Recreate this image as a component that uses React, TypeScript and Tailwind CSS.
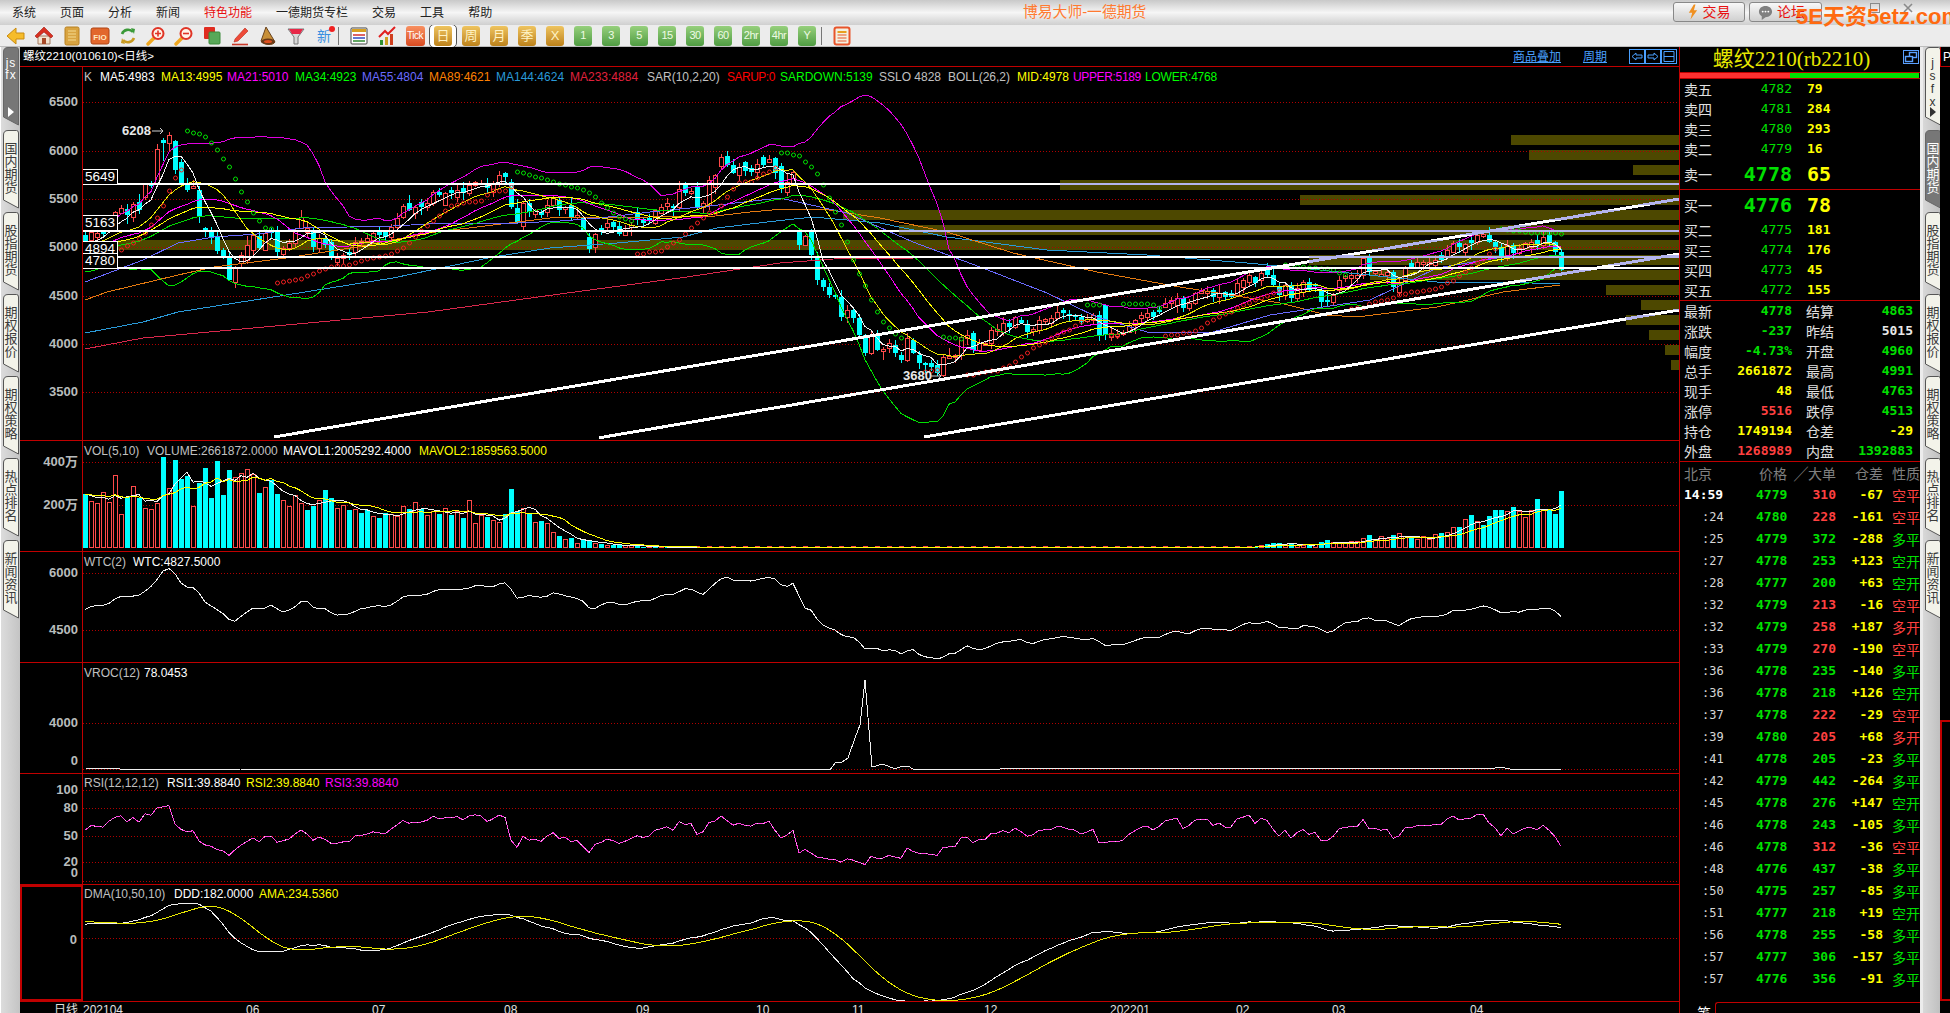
import React from "react";

const CANDLES = `c235,241 r232,240 r233,237 c230,234 r222,228 r212,222 r208,213 c209,215 r204,217 c202,210
r184,197 c184,186 r149,183 c140,143 r135,143 c141,170 c162,183 c183,190 r186,188 c190,217
c228,232 c230,237 c237,251 c250,257 c257,280 r267,282 r255,263 r245,260 r235,250 c236,248
r233,250 c231,232 c231,252 r248,254 r243,248 r230,243 r217,228 r228,232 c230,247 r238,248
c238,245 c242,258 r258,262 r255,258 c252,255 r242,252 r241,243 r238,241 r233,240 c230,235
c232,237 r227,237 r218,227 r206,217 c203,210 r207,213 c202,207 r203,207 r192,203 c192,195
r193,205 c190,193 r190,197 c188,193 r185,193 r182,185 r183,184 c183,188 r183,192 r175,183
c173,177 c182,207 c208,223 r203,226 c203,212 r210,214 c212,215 r205,212 r198,205 c200,210
r207,209 c205,217 r215,217 c218,230 c237,249 r234,247 c228,230 r223,227 c222,227 c226,234
r230,235 r225,227 c212,220 c219,223 c218,221 r210,223 r207,213 r203,206 c206,208 r189,207
c183,193 r191,193 c187,208 r203,207 r180,205 r175,187 r157,166 c156,165 c165,173 r167,175
c162,171 c168,172 r164,172 c157,165 r159,162 c158,173 c166,188 r182,192 r172,183 c232,245
r236,245 c232,255 c257,280 c280,287 c287,295 c295,297 c297,317 r310,317 c310,318 c318,335
c335,353 r335,353 c335,350 r349,351 r343,348 c345,353 c355,360 r338,360 c340,353 c355,363
c363,365 c363,367 c365,373 r357,375 r356,358 r355,357 r337,355 r335,338 c333,350 r343,350
r343,345 r330,343 r329,331 r323,332 c323,327 r317,327 c320,323 c325,332 r329,331 r320,330
r319,321 r318,323 r312,318 c310,313 c314,316 c315,317 c317,322 r319,321 r315,320 c315,335
c305,335 r333,337 r334,336 r332,334 r325,332 r320,325 r315,318 r313,317 c312,317 c310,312
r303,307 r300,303 r298,305 c298,308 r303,308 r293,303 r291,293 r291,293 c290,297 r293,297
c292,297 c293,297 r283,295 r280,287 r275,282 c277,283 r273,280 c268,275 c275,285 c287,295
r285,295 c285,298 r288,298 r282,292 c282,290 c284,286 c290,302 c300,302 r295,302 r280,290
r276,278 r275,278 r275,278 r258,275 c258,272 r271,273 r274,276 r272,275 c272,287 r283,292
r267,280 c263,267 r262,267 r262,264 r262,264 r260,265 c255,260 r250,257 r243,252 c243,247
r244,252 c240,243 r235,242 r234,236 c235,242 c242,247 c247,257 r245,257 c245,253 r248,253
r243,248 r242,247 c240,245 r237,245 c235,243 c242,252 c252,270`;

const candles = CANDLES.trim().split(/\s+/).map((s) => {
  const [t, b] = s.slice(1).split(",").map(Number);
  return { red: s[0] === "r", top: t, bot: b };
});
const N = candles.length;
const X = (i: number) => 85 + 6 * i;
const closes = candles.map((c) => (c.red ? c.top : c.bot));
const OFF = 60;
const hist = Array.from({ length: OFF }, (_, j) => {
  const k = OFF - j;
  return 236 + (k <= 26 ? k : 26 + (k - 26) * 2) + 12 * Math.sin(k * 0.9);
});
const all = [...hist, ...closes];
const ma = (n: number, i: number, src = all, off = OFF) => {
  let s = 0;
  for (let k = 0; k < n; k++) s += src[Math.max(0, off + i - k)];
  return s / n;
};
const sd = (n: number, i: number) => {
  const m = ma(n, i);
  let s = 0;
  for (let k = 0; k < n; k++) s += (all[OFF + i - k] - m) ** 2;
  return Math.sqrt(s / n);
};
const poly = (f: (i: number) => number, from = 0, to = N) => {
  const p: string[] = [];
  for (let i = from; i < to; i++) p.push(`${X(i)},${f(i).toFixed(1)}`);
  return p.join(" ");
};
const kp = (a: number[][]) => a.map((p) => p.join(",")).join(" ");

const MA55 = [[85,282],[143,260],[178,243],[214,237],[257,234],[303,228],[393,226],[446,223],[518,223],[560,221],[600,218],[650,212],[700,207],[780,198],[847,213],[913,242],[980,267],[1047,293],[1097,317],[1147,332],[1213,332],[1270,315],[1370,300],[1437,268],[1503,257],[1560,257]];
const MA89 = [[85,300],[107,292],[178,275],[214,267],[286,258],[357,247],[428,233],[550,218],[650,217],[716,216],[750,212],[783,209],[823,209],[880,218],[947,232],[1013,253],[1097,272],[1180,287],[1280,303],[1327,315],[1357,317],[1437,307],[1503,292],[1560,285]];
const MA144 = [[85,333],[143,322],[178,312],[286,295],[393,278],[493,257],[550,248],[617,243],[683,237],[717,228],[767,222],[813,217],[880,223],[947,237],[1047,250],[1147,255],[1247,263],[1300,268],[1437,282],[1503,282],[1560,284]];
const MA233 = [[85,349],[143,338],[286,325],[428,312],[560,294],[680,278],[780,263],[847,258],[913,258],[1100,257],[1560,256]];

const VOL_HEAD = [-54,46,44,55,45,72,33,-51,61,-50,39,38,44,-91,59,-88,-69,-72,41,-65,-80,-50,-87,-53,-78,70,74,78,73,-55,60,-68,-54,47,41,52,44,-38,-42,47,-58,-50,39,42,-38,38,-35,-38,31,-30,-35,33,31,41,-39,45,-39,32,36,-34,39,-33,36,-30,47,24,32,-31,27,25,-34,-59,-37,39,-34,25,-27,24,15,-12,8,-10,4,-8,-7,4,-4,2,-3,-3,2,2,-3,-1,1];
const VOL_TAIL = [-1,2,-4,-5,-5,3,-5,2,2,-3,3,-6,-8,5,5,5,6,6,9,-13,8,11,9,-13,14,11,-10,8,11,8,13,-15,15,20,-21,28,-33,26,-23,-32,-38,-38,36,-41,36,30,37,-49,38,-38,-34,-57];
const vols = [
  ...VOL_HEAD,
  ...Array.from({ length: N - VOL_HEAD.length - VOL_TAIL.length }, (_, k) => (k % 2 ? 1 : -1)),
  ...VOL_TAIL,
];
const absVols = vols.map(Math.abs);
const volMa = (n: number, i: number) => {
  let s = 0;
  for (let k = 0; k < n; k++) s += absVols[Math.max(0, i - k)];
  return s / n;
};

const rsi: number[] = [];
{
  let up = 1, tot = 2;
  all.forEach((c, j) => {
    if (j === 0) return;
    const d = all[j - 1] - c;
    up = (Math.max(d, 0) + 11 * up) / 12;
    tot = (Math.abs(d) + 11 * tot) / 12;
    if (j >= OFF) rsi.push((up / tot) * 100);
  });
}
const ddd = (i: number) => (ma(10, i) - ma(50, i)) * 0.6;
const ama = (i: number) => {
  let s = 0;
  for (let k = 0; k < 10; k++) s += ddd(i - k);
  return s / 10;
};

type Dots = [number, "g" | "r", number[]];
const SAR: Dots[] = [
  [6, "r", [250,246,243,239,233,225,218,206,191,178,170]],
  [17, "g", [131,133,134,137,143,150,159,167,179,192,202,213,221,228,229]],
  [32, "r", [283,282,281,280,279,276,274,271,269,267,266,266,265,263,261,259,258,257,256,254,251,248,243,237,231,226,221,216,211,206,205,203,202,202,201,195,191,191,191,187]],
  [72, "g", [172,173,175,177,178,180,182,184,185,187,188,190,193,197,203,208,213,217,219,221]],
  [92, "r", [254,254,252,252,251,247,243,240,234,228,223,218,213,213,206,197,189,183,182,182,178,174,172,168]],
  [116, "g", [153,153,155,156,162,167,174,185,198,212,225,242,260,274,286,300,312,322,328,334,338]],
  [140, "r", [372,371,370]],
  [143, "g", [337,338,338,339]],
  [147, "r", [375,375,373,372,371,371,368,366,362,357,353,348,345,342,338,335,332,330,326,322]],
  [167, "g", [305,305,305]],
  [171, "r", [335,336]],
  [173, "g", [304,304,304,304,304,305,308]],
  [180, "r", [336,335,335,333,333,331,328,323,320,317,314,312,308,305,303,300,298,296,293,291]],
  [200, "g", [265,266,267,267,268,268,269,269,270,273,275]],
  [211, "r", [309,308,308,304,302,301,300,298,295,294,292,292,291,290,289,287,283,281,276,272,268,263,259,254,249]],
  [236, "g", [229,230,231,231,232,233,233,233,233,233,234]],
];

const PROFILE: [number, number][] = [[135,1511],[150,1529],[165,1633],[180,1060],[195,1300],[210,843],[225,899],[240,118],[255,1309],[270,1370],[285,1606],[300,1641],[315,1626],[330,1649],[345,1665],[360,1671]];

const HLINES = [184, 230.5, 256.5, 268];
const CHANNELS = [
  [274, 437, 1679, 199],
  [599, 437.8, 1679, 254],
  [924, 437, 1679, 310],
];

const GRID = "#b00000";

function Grid({ ys }: { ys: number[] }) {
  return (
    <>
      {ys.map((y) => (
        <line key={y} x1={83} x2={1679} y1={y + 0.5} y2={y + 0.5} stroke={GRID} strokeDasharray="1 2" shapeRendering="crispEdges" />
      ))}
    </>
  );
}

function Plot({ top, h, children }: { top: number; h: number; children: React.ReactNode }) {
  return (
    <svg width={1596} height={h} viewBox={`83 ${top} 1596 ${h}`} className="block">
      {children}
    </svg>
  );
}

function Axis({ top, labels, boxed }: { top: number; labels: [string, number][]; boxed?: boolean }) {
  return (
    <div className={boxed ? "relative w-[63px] shrink-0 border-2 border-[#c00000]" : "relative w-[63px] shrink-0 border-r border-[#c00000]"}>
      {labels.map(([t, y]) => (
        <span
          key={t + y}
          className="absolute right-[4px] -translate-y-1/2 text-[13px] font-bold leading-[14px] text-[#b8bcbc]"
          style={{ top: y - top }}
        >
          {t}
        </span>
      ))}
    </div>
  );
}

function Legend({ items, top = "top-[3px]" }: { items: [string, string, number?, number?][]; top?: string }) {
  return (
    <div className={`absolute left-[1px] flex h-[14px] text-[12px] leading-[14px] ${top}`}>
      {items.map(([t, c, w, ls]) => (
        <span key={t} className="whitespace-nowrap" style={{ color: c, width: w, letterSpacing: ls }}>
          {t}
        </span>
      ))}
    </div>
  );
}

function Pane({ h, children, legend, axis }: { h: string; children: React.ReactNode; legend: React.ReactNode; axis: React.ReactNode }) {
  return (
    <div className={`flex shrink-0 border-b border-[#c00000] ${h}`}>
      {axis}
      <div className="relative flex-1 overflow-hidden">
        {children}
        {legend}
      </div>
    </div>
  );
}

function PriceBox({ v, cls }: { v: string; cls: string }) {
  return (
    <div className={`absolute left-[-1px] flex h-[16px] w-[36px] items-center justify-center border border-white bg-black text-[13.5px] text-white ${cls}`}>
      {v}
    </div>
  );
}

function MainChart() {
  const top = 67;
  const wicksUp = (i: number) => 1 + ((i * 7) % 5) + (i % 9 === 0 ? 4 : 0);
  const wicksDn = (i: number) => 1 + ((i * 11) % 6) + (i % 7 === 0 ? 3 : 0);
  const white = (
    <>
      {HLINES.map((y) => (
        <line key={y} x1={83} x2={1679} y1={y} y2={y} strokeWidth={2} />
      ))}
      {CHANNELS.map((c) => (
        <line key={c[0]} x1={c[0]} y1={c[1]} x2={c[2]} y2={c[3]} strokeWidth={3} />
      ))}
    </>
  );
  return (
    <Plot top={top} h={373}>
      <defs>
        <clipPath id="prof">
          {PROFILE.map(([y, x]) => (
            <rect key={y} x={x} y={y} width={1679 - x} height={10} />
          ))}
        </clipPath>
      </defs>
      {PROFILE.map(([y, x]) => (
        <rect key={y} x={x} y={y} width={1679 - x} height={10} fill="#4d4800" />
      ))}
      <Grid ys={[102, 151, 199, 247, 296, 344, 392]} />
      <g shapeRendering="crispEdges">
        {candles.map((c, i) => {
          const cx = X(i);
          const col = c.red ? "#ff4a4a" : "#00ffff";
          let hi = c.top - wicksUp(i);
          let lo = c.bot + wicksDn(i);
          if (i === 14) hi = 132;
          if (i === 13) lo = 161;
          return (
            <g key={i}>
              <line x1={cx + 0.5} x2={cx + 0.5} y1={hi} y2={lo} stroke={col} />
              {c.red ? (
                <rect x={cx - 1.5} y={c.top + 0.5} width={4} height={Math.max(1, c.bot - c.top)} fill="#000" stroke={col} />
              ) : (
                <rect x={cx - 2} y={c.top} width={5} height={Math.max(2, c.bot - c.top)} fill={col} />
              )}
            </g>
          );
        })}
        <polyline points={kp(MA233)} fill="none" stroke="#d8284c" />
        <polyline points={kp(MA144)} fill="none" stroke="#2a9ad8" />
        <polyline points={kp(MA89)} fill="none" stroke="#e57a10" />
        <polyline points={kp(MA55)} fill="none" stroke="#6a6aff" />
        <polyline points={poly((i) => ma(34, i))} fill="none" stroke="#00d800" />
        <polyline points={poly((i) => ma(21, i))} fill="none" stroke="#ff00ff" />
        <polyline points={poly((i) => ma(13, i))} fill="none" stroke="#e8e800" />
        <polyline points={poly((i) => ma(26, i) + 2 * sd(26, i))} fill="none" stroke="#00e000" />
        <polyline points={poly((i) => ma(26, i) - 2 * sd(26, i))} fill="none" stroke="#e000e0" />
        <polyline points={poly((i) => ma(26, i))} fill="none" stroke="#ffff00" />
        <polyline points={poly((i) => ma(5, i))} fill="none" stroke="#f0f0f0" />
      </g>
      {SAR.map(([st, c, ys]) =>
        ys.map((y, k) => (
          <circle key={st + "-" + k} cx={X(st + k) + 0.5} cy={y} r={2} fill="none" stroke={c === "g" ? "#00e000" : "#f02020"} />
        ))
      )}
      <g shapeRendering="crispEdges" stroke="#ffffff">
        {white}
      </g>
      <g shapeRendering="crispEdges" stroke="#b4b4ee" clipPath="url(#prof)">
        {white}
      </g>
      <text x={122} y={135} fill="#e8e8e8" fontSize={13} fontWeight="bold">6208</text>
      <path d="M152 131h11M160 128l3 3-3 3" stroke="#d0d0d0" fill="none" />
      <text x={903} y={380} fill="#e8e8e8" fontSize={13} fontWeight="bold">3680</text>
      <path d="M930 376h11M938 373l3 3-3 3" stroke="#d0d0d0" fill="none" />
    </Plot>
  );
}

function VolChart() {
  return (
    <Plot top={441} h={110}>
      <Grid ys={[462, 505]} />
      <g shapeRendering="crispEdges">
        {vols.map((v, i) => {
          const cx = X(i);
          const h = Math.abs(v);
          return v > 0 ? (
            <rect key={i} x={cx - 1.5} y={547.5 - h} width={4} height={h} fill="#000" stroke="#ff4a4a" />
          ) : (
            <rect key={i} x={cx - 2} y={548 - h} width={5} height={h} fill="#00ffff" />
          );
        })}
        <polyline points={poly((i) => 548 - volMa(5, i))} fill="none" stroke="#f0f0f0" />
        <polyline points={poly((i) => 548 - volMa(10, i))} fill="none" stroke="#ffff00" />
      </g>
    </Plot>
  );
}

const MONTHS: [string, number][] = [["202104", 83],["06", 246],["07", 372],["08", 504],["09", 636],["10", 756],["11", 852],["12", 984],["202201", 1110],["02", 1236],["03", 1332],["04", 1470]];

const ICON = "h-[20px] w-[20px]";
const IconBack = () => (
  <svg viewBox="0 0 20 20" className={ICON}><path d="M1 10 10 2v5h8v6h-8v5z" fill="#f6bc2a" stroke="#c98b10" /></svg>
);
const IconHome = () => (
  <svg viewBox="0 0 20 20" className={ICON}><path d="M4 10h12v8H4z" fill="#f3e3d0" stroke="#a67c60" /><path d="M8 12h4v6H8z" fill="#a84a28" /><path d="M10 1 1 10l2 2 7-6 7 6 2-2z" fill="#d83020" stroke="#a01810" strokeWidth=".6" /></svg>
);
const IconBook = () => (
  <svg viewBox="0 0 20 20" className={ICON}><rect x="3" y="1" width="14" height="18" rx="1.5" fill="#d9a441" stroke="#b88020" /><path d="M6 5h8M6 8h8M6 11h8M6 14h8" stroke="#f5dc92" /></svg>
);
const IconFio = () => (
  <svg viewBox="0 0 20 20" className={ICON}><rect x="1" y="2" width="18" height="16" rx="2" fill="#e2672c" stroke="#b04414" /><text x="10" y="14" textAnchor="middle" fontSize="8" fontWeight="bold" fill="#ffe8c0">FIO</text></svg>
);
const IconRefresh = () => (
  <svg viewBox="0 0 20 20" className={ICON} fill="none" strokeWidth="2.6"><path d="M4 8a6.5 6.5 0 0 1 11-2" stroke="#3b9a38" /><path d="M13 2l4 1-1 5z" fill="#3b9a38" /><path d="M16 12a6.5 6.5 0 0 1-11 2" stroke="#c89a20" /><path d="M7 18l-4-1 1-5z" fill="#c89a20" /></svg>
);
const IconZoom = ({ plus }: { plus?: boolean }) => (
  <svg viewBox="0 0 20 20" className={ICON}><path d="M8 12 2 18" stroke="#f0a820" strokeWidth="3.4" strokeLinecap="round" /><circle cx="12" cy="7.5" r="5.5" fill="#fff4e8" stroke="#e03426" strokeWidth="2" /><path d={plus ? "M9 7.5h6M12 4.5v6" : "M9 7.5h6"} stroke="#e03426" strokeWidth="1.6" /></svg>
);
const IconSquares = () => (
  <svg viewBox="0 0 20 20" className={ICON}><rect x="2" y="1" width="11" height="12" rx="1" fill="#e02c20" /><rect x="7" y="6" width="11" height="12" rx="1" fill="#58a858" stroke="#3a8a3a" /></svg>
);
const IconPen = () => (
  <svg viewBox="0 0 20 20" className={ICON}><path d="M5 13 15 2l3 3L8 15l-4 1z" fill="#ee4a38" stroke="#b82818" strokeWidth=".6" /><path d="M2 18.5h16" stroke="#c83828" strokeWidth="1.6" /></svg>
);
const IconHorn = () => (
  <svg viewBox="0 0 20 20" className={ICON}><path d="M8 1 3 15c2 4 12 5 14 1z" fill="#c89038" stroke="#6a4420" /><ellipse cx="10" cy="15.5" rx="7" ry="3" fill="#6a3a18" /><ellipse cx="10" cy="15.5" rx="4" ry="1.6" fill="#e05020" /></svg>
);
const IconFunnel = () => (
  <svg viewBox="0 0 20 20" className={ICON}><path d="M2 3h16l-6 8v7H8v-7z" fill="#d8d8d8" stroke="#777" /><path d="M3 3h14l-3 5H6z" fill="#e82848" /></svg>
);
const IconXin = () => (
  <div className="relative flex h-[20px] w-[20px] items-center justify-center text-[14px] leading-none text-[#3a8fe0]">
    新
    <span className="absolute right-[-1px] top-[0px] h-[6px] w-[6px] rounded-full bg-[#f02020]" />
  </div>
);
const IconTable = () => (
  <svg viewBox="0 0 20 20" className={ICON}><rect x="2" y="2" width="16" height="16" rx="1" fill="#fff" stroke="#444" /><path d="M3 3h14v3H3z" fill="#d8a020" /><path d="M4 9h12" stroke="#d02020" strokeWidth="1.4" /><path d="M4 12h12" stroke="#2040c0" strokeWidth="1.4" /><path d="M4 15h12" stroke="#208020" strokeWidth="1.4" /></svg>
);
const IconChart = () => (
  <svg viewBox="0 0 20 20" className={ICON}><path d="M2 11 8 5l3 3 7-7" stroke="#e02020" strokeWidth="2" fill="none" /><path d="M3 14h3v5H3z" fill="#309030" /><path d="M8 11h3v8H8z" fill="#d0a020" /><path d="M13 8h3v11h-3z" fill="#d04020" /></svg>
);
const IconTick = () => (
  <div className="flex h-[20px] w-[19px] items-center justify-center rounded-[3px] bg-linear-to-b from-[#f89060] to-[#d84a20] text-[10px] leading-none tracking-[-0.5px] text-white">Tick</div>
);
const IconCalc = () => (
  <svg viewBox="0 0 20 20" className={ICON}><rect x="2.5" y="1.5" width="15" height="17" rx="2" fill="#f4f0e0" stroke="#e8542a" strokeWidth="2" /><path d="M5.5 5h9v2h-9z" fill="#e8a020" /><path d="M5.5 9h9M5.5 12h9M5.5 15h9" stroke="#e8542a" /></svg>
);

function Tile({ t, green, selected }: { t: string; green?: boolean; selected?: boolean }) {
  const tile = (
    <div
      className={
        green
          ? "flex h-[20px] w-[18px] items-center justify-center rounded-[3px] bg-linear-to-b from-[#96d07c] to-[#4f9c42] text-[11px] leading-none tracking-[-0.5px] text-[#eefbe4]"
          : "flex h-[20px] w-[18px] items-center justify-center rounded-[3px] bg-linear-to-b from-[#efc45e] to-[#bd8218] text-[13px] leading-none text-[#fff3c4]"
      }
    >
      {t}
    </div>
  );
  if (!selected) return tile;
  return <div className="flex h-[24px] w-[28px] items-center justify-center rounded-[5px] border border-[#555] bg-white">{tile}</div>;
}

const TOOLS: React.ReactNode[] = [
  <IconBack />, <IconHome />, <IconBook />, <IconFio />, <IconRefresh />, <IconZoom plus />, <IconZoom />, <IconSquares />, <IconPen />, <IconHorn />, <IconFunnel />, <IconXin />,
];
const TOOLS2: React.ReactNode[] = [
  <IconTable />, <IconChart />, <IconTick />, <Tile t="日" selected />, <Tile t="周" />, <Tile t="月" />, <Tile t="季" />, <Tile t="X" />,
  <Tile t="1" green />, <Tile t="3" green />, <Tile t="5" green />, <Tile t="15" green />, <Tile t="30" green />, <Tile t="60" green />, <Tile t="2hr" green />, <Tile t="4hr" green />, <Tile t="Y" green />,
];

function Slot({ children }: { children: React.ReactNode }) {
  return <div className="flex h-full w-[28px] shrink-0 items-center justify-center">{children}</div>;
}
const Sep = () => (
  <div className="flex h-full w-[7px] shrink-0 items-center justify-start">
    <div className="h-[18px] w-[1px] bg-[#777]" />
  </div>
);

function TitleBar() {
  const menus: [string, boolean?][] = [["系统"],["页面"],["分析"],["新闻"],["特色功能", true],["一德期货专栏"],["交易"],["工具"],["帮助"]];
  return (
    <div className="relative flex h-[25px] shrink-0 items-center bg-linear-to-b from-[#c9c9c9] via-[#f6f6f6] to-[#cfcfcf] text-[12px] text-[#222]">
      <div className="flex gap-[24px] pl-[12px]">
        {menus.map(([m, red]) => (
          <span key={m} className={red ? "text-[#e81010]" : ""}>{m}</span>
        ))}
      </div>
      <span className="absolute left-[1023px] top-[3px] whitespace-nowrap text-[14.8px] leading-[18px] text-[#ff7a30]">博易大师-一德期货</span>
      <div className="absolute left-[1673px] top-[2px] flex h-[20px] w-[72px] items-center justify-center gap-[5px] rounded-[3px] border border-[#888] bg-linear-to-b from-[#f8f8f8] to-[#d0d0d0] text-[14px] text-[#e81010]">
        <svg viewBox="0 0 12 18" className="h-[16px] w-[10px]"><path d="M7 0 1 10h4l-2 8 8-11H7l2-7z" fill="#f09020" /></svg>
        交易
      </div>
      <div className="absolute left-[1749px] top-[2px] flex h-[20px] w-[73px] items-center gap-[4px] rounded-[3px] border border-[#888] bg-linear-to-b from-[#f8f8f8] to-[#d0d0d0] pl-[8px] text-[14px] text-[#e81010]">
        <svg viewBox="0 0 16 16" className="h-[15px] w-[15px]"><path d="M8 1c4 0 7 2.6 7 6s-3 6-7 6l-4 3v-4C2 11 1 9 1 7c0-3.4 3-6 7-6z" fill="#808080" /><circle cx="5" cy="7" r="1" fill="#fff" /><circle cx="8" cy="7" r="1" fill="#fff" /><circle cx="11" cy="7" r="1" fill="#fff" /></svg>
        论坛
      </div>
      <svg viewBox="0 0 60 14" className="absolute left-[1862px] top-[2px] h-[14px] w-[60px]" fill="none" stroke="#8a8a8a"><rect x="8.5" y="1.5" width="9" height="9" /><path d="M42 2l8 8M50 2l-8 8" strokeWidth="1.6" /></svg>
      <span className="absolute left-[1796px] top-[4px] z-10 whitespace-nowrap text-[22px] font-bold leading-[26px] text-[#ff6a10]">5E天资5etz.com</span>
    </div>
  );
}

function Toolbar() {
  return (
    <div className="flex h-[22px] shrink-0 items-center border-b border-[#bdbdbd] bg-[#ececec] pl-[2px]">
      {TOOLS.map((t, i) => <Slot key={i}>{t}</Slot>)}
      <Sep />
      {TOOLS2.map((t, i) => <Slot key={i}>{t}</Slot>)}
      <Sep />
      <Slot><IconCalc /></Slot>
    </div>
  );
}

function TabShape({ active, h }: { active?: boolean; h: number }) {
  return (
    <svg viewBox={`0 0 18 ${h}`} className="absolute left-0 top-0 w-[18px]" style={{ height: h }}>
      <path
        d={`M2.5 ${h - 10} V5 Q2.5 .5 7 .5 H15.5 Q17.5 .5 17.5 3 V${h - 2} Z`}
        fill={active ? "#777777" : "#f3f3ea"}
        stroke={active ? "#666" : "#555"}
      />
    </svg>
  );
}

function SideTab({ t, active }: { t: string; active?: boolean }) {
  return (
    <div className="relative h-[82px] w-full shrink-0">
      <TabShape active={active} h={80} />
      <span
        className={`absolute left-[3px] top-[12px] w-[14px] text-center text-[13px] leading-[13px] ${active ? "text-white" : "text-[#3c3c3c]"}`}
      >
        {t.split("").map((c, i) => <span key={i} className="block">{c}</span>)}
      </span>
    </div>
  );
}

function JsTab({ active, letters, cls }: { active?: boolean; letters: string[]; cls: string }) {
  return (
    <div className="relative h-[83px] w-full shrink-0">
      <TabShape active={active} h={80} />
      <div className={`absolute left-[3px] top-[10px] flex w-[14px] flex-col items-center text-[12px] tracking-[1px] ${cls} ${active ? "text-white" : "text-[#333]"}`}>
        {letters.map((c, i) => <span key={i}>{c}</span>)}
      </div>
      <div className={`absolute left-[7px] top-[60px] h-0 w-0 border-y-[5px] border-l-[6px] border-y-transparent ${active ? "border-l-white" : "border-l-[#333]"}`} />
    </div>
  );
}

const TABS = ["国内期货", "股指期货", "期权报价", "期权策略", "热点排名", "新闻资讯"];

function LeftTabs() {
  return (
    <div className="flex w-[20px] shrink-0 flex-col overflow-hidden border-l border-white bg-linear-to-r from-[#dcdcdc] to-[#c4c4c4]">
      <JsTab active letters={["js", "fx"]} cls="leading-[12px]" />
      {TABS.map((t) => <SideTab key={t} t={t} />)}
    </div>
  );
}

function RightTabs() {
  return (
    <div className="flex w-[17px] shrink-0 flex-col overflow-hidden bg-linear-to-r from-[#d8d8d8] to-[#c0c0c0]">
      <JsTab letters={["j", "s", "f", "x"]} cls="leading-[13px]" />
      {TABS.map((t, i) => <SideTab key={t} t={t} active={i === 0} />)}
    </div>
  );
}

const G = "text-[#00e000]";
const Y = "text-[#ffff00]";
const R = "text-[#ff4040]";
const W = "text-[#e8e8e8]";

function Depth({ l, p, v, big }: { l: string; p: string; v: string; big?: boolean }) {
  return (
    <div className={`flex items-center pl-[4px] ${big ? "h-[30px]" : "h-[20px]"}`}>
      <span className="w-[28px] font-['Noto_Sans_CJK_SC',sans-serif] text-[14px] text-[#e0e0e0]">{l}</span>
      <span className={`w-[80px] text-right ${G} ${big ? "text-[20px] font-bold" : "text-[13px]"}`}>{p}</span>
      <span className={`ml-[15px] ${Y} ${big ? "text-[20px] font-bold" : "text-[13px] font-bold"}`}>{v}</span>
    </div>
  );
}

function Stat({ a, b, bc, c, d, dc }: { a: string; b: string; bc: string; c: string; d: string; dc: string }) {
  return (
    <div className="flex h-[20px] items-center pl-[4px] text-[13px] font-bold">
      <span className="w-[28px] font-['Noto_Sans_CJK_SC',sans-serif] text-[14px] font-normal text-[#e0e0e0]">{a}</span>
      <span className={`w-[80px] text-right ${bc}`}>{b}</span>
      <span className="ml-[14px] w-[28px] font-['Noto_Sans_CJK_SC',sans-serif] text-[14px] font-normal text-[#e0e0e0]">{c}</span>
      <span className={`w-[79px] text-right ${dc}`}>{d}</span>
    </div>
  );
}

const TRADES: [string, string, string, string, string, boolean][] = [
  ["14:59","4779","310","-67","空平",true],[":24","4780","228","-161","空平",true],[":25","4779","372","-288","多平",false],[":27","4778","253","+123","空开",false],
  [":28","4777","200","+63","空开",false],[":32","4779","213","-16","空平",true],[":32","4779","258","+187","多开",true],[":33","4779","270","-190","空平",true],
  [":36","4778","235","-140","多平",false],[":36","4778","218","+126","空开",false],[":37","4778","222","-29","空平",true],[":39","4780","205","+68","多开",true],
  [":41","4778","205","-23","多平",false],[":42","4779","442","-264","多平",false],[":45","4778","276","+147","空开",false],[":46","4778","243","-105","多平",false],
  [":46","4778","312","-36","空平",true],[":48","4776","437","-38","多平",false],[":50","4775","257","-85","多平",false],[":51","4777","218","+19","空开",false],
  [":56","4778","255","-58","多平",false],[":57","4777","306","-157","多平",false],[":57","4776","356","-91","多平",false],
];

function RightPanel() {
  return (
    <div className="flex w-[241px] shrink-0 flex-col border-l border-[#c00000] bg-black font-['DejaVu_Sans_Mono',monospace]">
      <div className="relative flex h-[25px] shrink-0 items-center justify-center pr-[17px] font-['Liberation_Serif','Noto_Sans_CJK_SC',serif] text-[21px] leading-[25px] text-[#e8e800]">
        螺纹2210(rb2210)
        <svg viewBox="0 0 16 14" className="absolute right-[1px] top-[3px] h-[14px] w-[16px]" fill="none" stroke="#5aa0ff"><rect x=".5" y=".5" width="15" height="13" /><rect x="6.5" y="2.5" width="7" height="5" strokeWidth="1.4" /><rect x="2.5" y="6.5" width="7" height="5" strokeWidth="1.4" fill="#000" /></svg>
      </div>
      <div className="flex h-[7px] shrink-0 border-y border-[#c00000]">
        <div className="w-[110px] bg-[#ff3030]" />
        <div className="w-[129px] bg-[#00e000]" />
      </div>
      <Depth l="卖五" p="4782" v="79" />
      <Depth l="卖四" p="4781" v="284" />
      <Depth l="卖三" p="4780" v="293" />
      <Depth l="卖二" p="4779" v="16" />
      <Depth l="卖一" p="4778" v="65" big />
      <div className="border-t border-[#c00000]" />
      <Depth l="买一" p="4776" v="78" big />
      <Depth l="买二" p="4775" v="181" />
      <Depth l="买三" p="4774" v="176" />
      <Depth l="买四" p="4773" v="45" />
      <Depth l="买五" p="4772" v="155" />
      <div className="border-t border-[#c00000]" />
      <Stat a="最新" b="4778" bc={G} c="结算" d="4863" dc={G} />
      <Stat a="涨跌" b="-237" bc={G} c="昨结" d="5015" dc={W} />
      <Stat a="幅度" b="-4.73%" bc={G} c="开盘" d="4960" dc={G} />
      <Stat a="总手" b="2661872" bc={Y} c="最高" d="4991" dc={G} />
      <Stat a="现手" b="48" bc={Y} c="最低" d="4763" dc={G} />
      <Stat a="涨停" b="5516" bc={R} c="跌停" d="4513" dc={G} />
      <Stat a="持仓" b="1749194" bc={Y} c="仓差" d="-29" dc={Y} />
      <Stat a="外盘" b="1268989" bc={R} c="内盘" d="1392883" dc={G} />
      <div className="border-t border-[#c00000]" />
      <div className="flex h-[22px] shrink-0 items-center pl-[4px] font-['Noto_Sans_CJK_SC',sans-serif] text-[14px] text-[#808080]">
        <span className="w-[72px]">北京</span>
        <span className="w-[31px] text-right">价格</span>
        <span className="w-[49px] whitespace-nowrap text-right">╱大单</span>
        <span className="w-[47px] text-right">仓差</span>
        <span className="ml-[9px]">性质</span>
      </div>
      {TRADES.map(([t, p, v, d, k, red], i) => (
        <div key={i} className="flex h-[22px] shrink-0 items-center pl-[4px] text-[13px] font-bold">
          {i === 0 ? (
            <span className="w-[72px] text-white">{t}</span>
          ) : (
            <span className="w-[72px] pl-[18px] text-[12px] font-normal text-[#d8d8d8]">{t}</span>
          )}
          <span className={`w-[31px] text-right ${G}`}>{p}</span>
          <span className={`w-[49px] text-right ${red ? R : G}`}>{v}</span>
          <span className={`w-[47px] text-right ${Y}`}>{d}</span>
          <span className={`ml-[9px] font-['Noto_Sans_CJK_SC',sans-serif] text-[14px] font-normal ${red ? R : G}`}>{k}</span>
        </div>
      ))}
      <div className="flex min-h-0 flex-1">
        <div className="w-[35px] pl-[17px] pt-[12px] font-['Noto_Sans_CJK_SC',sans-serif] text-[14px] leading-[20px] text-white">笔</div>
        <div className="mt-[12px] flex-1 rounded-tl-[3px] border-l border-t border-[#c00000]" />
      </div>
    </div>
  );
}

function Charts() {
  return (
    <div className="flex w-[1659px] shrink-0 flex-col bg-black font-['Liberation_Sans','Noto_Sans_CJK_SC',sans-serif]">
      <div className="flex h-[20px] shrink-0 items-center gap-[22px] border-b border-[#c00000] pl-[3px] pr-[2px] text-[12px]">
        <span className="mr-auto text-[11.5px] text-white">螺纹2210(010610)&lt;日线&gt;</span>
        <span className="text-[#4aa0ff] underline">商品叠加</span>
        <span className="text-[#4aa0ff] underline">周期</span>
        <svg viewBox="0 0 48 15" className="h-[15px] w-[48px]" fill="none" stroke="#4aa0ff">
          <rect x=".5" y=".5" width="15" height="14" /><rect x="16.5" y=".5" width="15" height="14" /><rect x="32.5" y=".5" width="15" height="14" />
          <path d="M3 7.5 7 4v2h6v3H7v2zM29 7.5 25 4v2h-6v3h6v2zM35 2.5h10v10H35zM35 7.5h10" />
        </svg>
      </div>
      <Pane
        h="h-[374px]"
        axis={<Axis top={67} labels={[["6500",102],["6000",151],["5500",199],["5000",247],["4500",296],["4000",344],["3500",392]]} />}
        legend={
          <Legend
            items={[
              ["K","#c0c0c0",16],["MA5:4983","#ffffff",61],["MA13:4995","#ffff00",66],["MA21:5010","#ff00ff",68],["MA34:4923","#00ff00",67],["MA55:4804","#6a6aff",67],["MA89:4621","#ff8000",67],["MA144:4624","#2a9ad8",74],["MA233:4884","#e0203c",77],
              ["SAR(10,2,20)","#c0c0c0",80],["SARUP:0","#ff0000",53,-0.5],["SARDOWN:5139","#00ff00",99],["SSLO 4828","#c0c0c0",69],["BOLL(26,2)","#c0c0c0",69],["MID:4978","#ffff00",56],["UPPER:5189","#ff00ff",72,-0.35],["LOWER:4768","#00ff00",undefined,-0.2],
            ]}
          />
        }
      >
        <MainChart />
        <PriceBox v="5649" cls="top-[102px]" />
        <PriceBox v="5163" cls="top-[148px]" />
        <PriceBox v="4894" cls="top-[174px]" />
        <PriceBox v="4780" cls="top-[186px]" />
      </Pane>
      <Pane
        h="h-[111px]"
        axis={<Axis top={441} labels={[["400万",462],["200万",505]]} />}
        legend={<Legend items={[["VOL(5,10)","#c0c0c0",63],["VOLUME:2661872.0000","#c0c0c0",136],["MAVOL1:2005292.4000","#ffffff",136],["MAVOL2:1859563.5000","#ffff00"]]} />}
      >
        <VolChart />
      </Pane>
      <Pane
        h="h-[111px]"
        axis={<Axis top={552} labels={[["6000",573],["4500",630]]} />}
        legend={<Legend items={[["WTC(2)","#c0c0c0",49],["WTC:4827.5000","#ffffff"]]} />}
      >
        <Plot top={552} h={110}>
          <Grid ys={[573, 630]} />
          <polyline shapeRendering="crispEdges" points={poly((i) => 611 + ((all[OFF + i] + all[OFF + i - 1]) / 2 - 247.5) * 0.393)} fill="none" stroke="#f0f0f0" />
        </Plot>
      </Pane>
      <Pane
        h="h-[111px]"
        axis={<Axis top={663} labels={[["4000",723],["0",761]]} />}
        legend={<Legend items={[["VROC(12)","#c0c0c0",60],["78.0453","#ffffff"]]} />}
      >
        <Plot top={663} h={110}>
          <Grid ys={[723, 769]} />
          <polyline
            shapeRendering="crispEdges"
            points={kp([[85,768],[120,769],[240,769],[280,770],[500,769],[830,770],[835,763],[842,762],[848,758],[855,738],[860,725],[865,680],[872,767],[883,764],[895,769],[902,766],[908,766],[913,769],[1000,769],[1200,768],[1495,768],[1500,767],[1510,769],[1561,769]])}
            fill="none"
            stroke="#f0f0f0"
          />
        </Plot>
      </Pane>
      <Pane
        h="h-[111px]"
        axis={<Axis top={774} labels={[["100",790],["80",808],["50",836],["20",862],["0",873]]} />}
        legend={<Legend top="top-[2px]" items={[["RSI(12,12,12)","#c0c0c0",83],["RSI1:39.8840","#ffffff",79],["RSI2:39.8840","#ffff00",79],["RSI3:39.8840","#ff00ff"]]} />}
      >
        <Plot top={774} h={110}>
          <Grid ys={[790, 808, 836, 862, 881]} />
          <g shapeRendering="crispEdges" fill="none">
            <polyline points={poly((i) => 881 - rsi[i] * 0.91)} stroke="#f4d0f0" />
            <polyline points={poly((i) => 881 - rsi[i] * 0.91)} stroke="#ff40e0" strokeDasharray="5 1" />
          </g>
        </Plot>
      </Pane>
      <Pane
        h="h-[117px]"
        axis={<Axis boxed top={885} labels={[["0",938]]} />}
        legend={<Legend top="top-[2px]" items={[["DMA(10,50,10)","#c0c0c0",90],["DDD:182.0000","#ffffff",85],["AMA:234.5360","#ffff00"]]} />}
      >
        <Plot top={885} h={116}>
          <Grid ys={[938]} />
          <g shapeRendering="crispEdges" fill="none">
            <polyline points={poly((i) => 938 + ddd(i))} stroke="#f0f0f0" />
            <polyline points={poly((i) => 938 + ama(i))} stroke="#e8e800" />
          </g>
        </Plot>
      </Pane>
      <div className="flex h-[11px] shrink-0 overflow-hidden text-[12px] leading-[12px] text-[#e0e0e0]">
        <div className="w-[63px] pr-[5px] pt-[2px] text-right">日线</div>
        <div className="relative flex-1">
          {MONTHS.map(([m, x]) => (
            <span key={m} className="absolute top-[2px]" style={{ left: x - 83 }}>{m}</span>
          ))}
        </div>
      </div>
    </div>
  );
}

export default function App() {
  return (
    <div className="flex h-[1013px] w-[1950px] flex-col overflow-hidden bg-[#ececec] font-['Liberation_Sans','Noto_Sans_CJK_SC',sans-serif]">
      <TitleBar />
      <Toolbar />
      <div className="flex min-h-0 flex-1">
        <LeftTabs />
        <Charts />
        <RightPanel />
        <div className="w-[3px] shrink-0 bg-[#ececec]" />
        <RightTabs />
        <div className="flex w-[10px] shrink-0 flex-col bg-black">
          <div className="h-[20px] border-b border-l border-[#c00000] pl-[2px] text-[12px] leading-[20px] text-white">P</div>
          <div className="h-[653px]" />
          <div className="h-[281px] border-y-2 border-l-2 border-[#c00000]" />
        </div>
      </div>
    </div>
  );
}
